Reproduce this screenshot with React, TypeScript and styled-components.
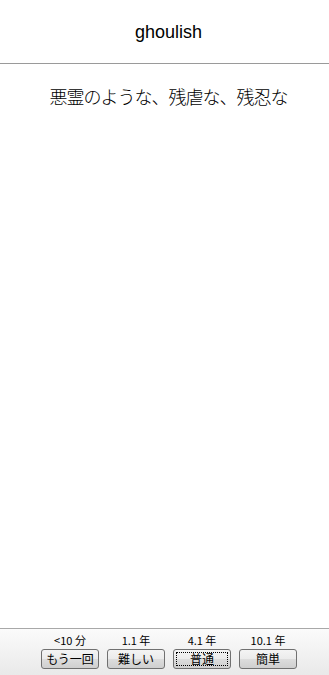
import React from 'react';
import styled, { createGlobalStyle } from 'styled-components';

const GlobalStyle = createGlobalStyle`
  html, body {
    margin: 0;
    padding: 0;
    background: #fff;
  }
`;

const Page = styled.div`
  display: flex;
  flex-direction: column;
  width: 329px;
  height: 675px;
  font-family: 'Liberation Sans', Arial, 'Noto Sans CJK JP', sans-serif;
  color: #000;
`;

const Header = styled.header`
  display: flex;
  align-items: center;
  justify-content: center;
  height: 64px;
  border-bottom: 1px solid #9a9a9a;
  box-sizing: border-box;
  font-size: 18px;
  padding-top: 1px;
  padding-left: 8px;
`;

const Body = styled.main`
  flex: 1;
  padding-top: 21px;
  padding-left: 8px;
  text-align: center;
  font-family: 'Noto Sans CJK JP', sans-serif;
  font-size: 18px;
  font-weight: 300;
  letter-spacing: -1px;
  line-height: 22px;
`;

const Footer = styled.footer`
  display: flex;
  justify-content: center;
  gap: 8px;
  height: 47px;
  box-sizing: border-box;
  padding-left: 9px;
  padding-top: 4px;
  border-top: 1px solid #a8a8a8;
  background: linear-gradient(#fbfbfb, #e9e9e9);
`;

const Choice = styled.div`
  display: flex;
  flex-direction: column;
  align-items: center;
  width: 58px;
`;

const Due = styled.span`
  font-family: 'Noto Sans CJK JP', sans-serif;
  font-size: 11px;
  line-height: 15px;
  height: 16px;
`;

const AnswerBtn = styled.button<{ focused?: boolean }>`
  width: 58px;
  height: 20px;
  padding: 0;
  border: 1px solid #707070;
  border-radius: 3px;
  background: linear-gradient(#f4f4f4 0%, #ebebeb 50%, #dddddd 51%, #cfcfcf 100%);
  font-family: 'Noto Sans CJK JP', sans-serif;
  font-size: 12px;
  line-height: 16px;
  color: #000;
  outline: ${(p) => (p.focused ? '1px dotted #000' : 'none')};
  outline-offset: -4px;
`;

const answers = [
  { due: '<10 分', label: 'もう一回' },
  { due: '1.1 年', label: '難しい' },
  { due: '4.1 年', label: '普通', focused: true },
  { due: '10.1 年', label: '簡単' },
];

export default function App() {
  return (
    <Page>
      <GlobalStyle />
      <Header>ghoulish</Header>
      <Body>悪霊のような、残虐な、残忍な</Body>
      <Footer>
        {answers.map((a) => (
          <Choice key={a.label}>
            <Due>{a.due}</Due>
            <AnswerBtn focused={a.focused}>{a.label}</AnswerBtn>
          </Choice>
        ))}
      </Footer>
    </Page>
  );
}
